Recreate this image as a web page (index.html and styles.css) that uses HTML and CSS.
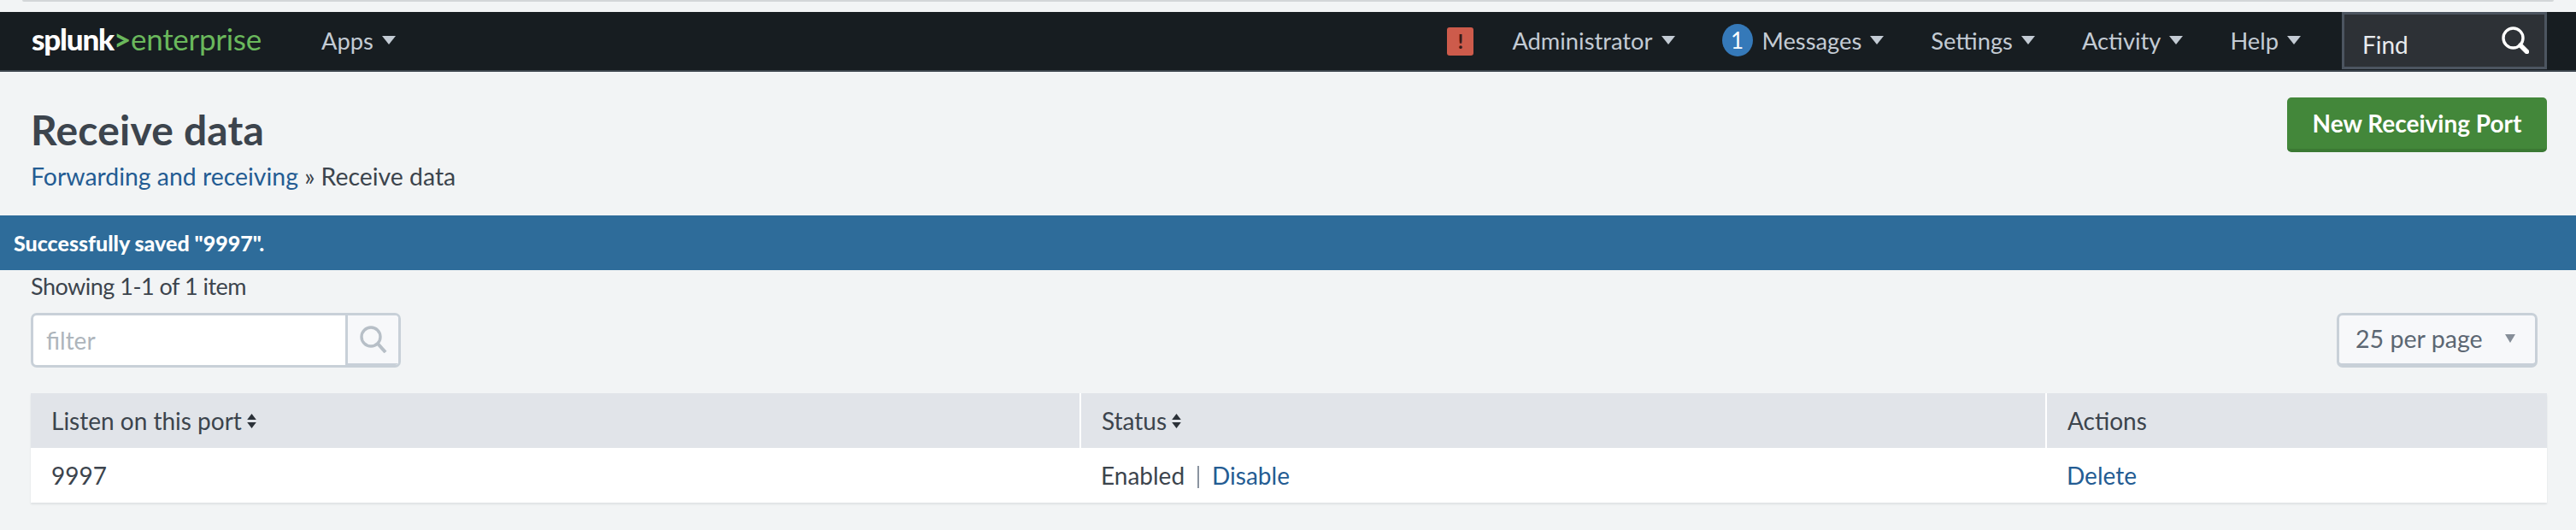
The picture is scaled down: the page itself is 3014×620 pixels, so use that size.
FILE: index.html
```html
<!DOCTYPE html>
<html lang="en">
<head>
<meta charset="utf-8">
<title>Receive data</title>
<link rel="stylesheet" href="styles.css">
</head>
<body>
<div class="top-line"></div>
<nav class="nav">
  <div class="logo"><span class="logo-splunk">splunk</span><span class="logo-gt">&gt;</span><span class="logo-ent">enterprise</span></div>
  <a class="nav-item nav-apps">Apps<i class="caret"></i></a>
  <div class="nav-right">
    <span class="alert">!</span>
    <a class="nav-item">Administrator<i class="caret"></i></a>
    <a class="nav-item nav-messages"><span class="badge">1</span>Messages<i class="caret"></i></a>
    <a class="nav-item">Settings<i class="caret"></i></a>
    <a class="nav-item">Activity<i class="caret"></i></a>
    <a class="nav-item">Help<i class="caret"></i></a>
    <div class="find">
      <span class="find-label">Find</span>
      <svg class="find-icon" viewBox="0 0 32 32" aria-hidden="true"><circle cx="13.5" cy="13.5" r="11.5" fill="none" stroke="#fff" stroke-width="3.4"/><path d="M22 22 L29.5 29.5" stroke="#fff" stroke-width="5.5" stroke-linecap="round"/></svg>
    </div>
  </div>
</nav>
<header class="page-head">
  <div>
    <h1 class="title">Receive data</h1>
    <div class="crumbs"><a class="link">Forwarding and receiving</a> » Receive data</div>
  </div>
  <a class="btn-primary">New Receiving Port</a>
</header>
<div class="banner">Successfully saved "9997".</div>
<section class="content">
  <div class="count">Showing 1-1 of 1 item</div>
  <div class="controls">
    <div class="filter">
      <input class="filter-input" type="text" placeholder="filter">
      <span class="filter-btn">
        <svg class="filter-icon" viewBox="0 0 32 32" aria-hidden="true"><circle cx="13" cy="13" r="11" fill="none" stroke="#b7bfc7" stroke-width="3.4"/><path d="M21 21 L30 31" stroke="#b7bfc7" stroke-width="4"/></svg>
      </span>
    </div>
    <div class="per-page">25 per page<i class="caret caret-small"></i></div>
  </div>
  <table class="table">
    <thead>
      <tr>
        <th class="col-port">Listen on this port<svg class="sort" viewBox="0 0 10 16" aria-hidden="true"><path d="M5 0 L10 6.5 H0 Z M5 16 L0 9.5 H10 Z"/></svg></th>
        <th class="col-status">Status<svg class="sort" viewBox="0 0 10 16" aria-hidden="true"><path d="M5 0 L10 6.5 H0 Z M5 16 L0 9.5 H10 Z"/></svg></th>
        <th>Actions</th>
      </tr>
    </thead>
    <tbody>
      <tr>
        <td>9997</td>
        <td>Enabled<span class="sep"></span><a class="link">Disable</a></td>
        <td><a class="link">Delete</a></td>
      </tr>
    </tbody>
  </table>
</section>
</body>
</html>
```
FILE: styles.css
```css
* { box-sizing: border-box; }
html, body { margin: 0; height: 100%; }
body {
  background: #f2f4f5;
  color: #3c444d;
  font-family: Lato, "Liberation Sans", sans-serif;
  font-size: 28px;
  overflow: hidden;
}
.top-line {
  height: 2px;
  margin: 0 26px 12px;
  background: #d3d6d8;
  border-radius: 0 0 6px 6px;
}
.nav {
  display: flex;
  align-items: center;
  height: 70px;
  padding-left: 37px;
  padding-right: 34px;
  background: #171d21;
  border-bottom: 2px solid #3c444d;
}
.logo {
  display: flex;
  align-items: baseline;
  width: 339px;
  font-size: 35px;
  letter-spacing: -1.2px;
  padding-bottom: 6px;
}
.logo-splunk { color: #fff; font-weight: 900; }
.logo-gt { color: #6ab85c; font-weight: 900; margin: 0 1px 0 0; }
.logo-ent { color: #6ab85c; letter-spacing: -0.3px; }
.nav-item {
  display: flex;
  align-items: center;
  color: #c3cbd4;
  font-size: 27.3px;
  white-space: nowrap;
  padding-bottom: 2px;
}
.nav-right {
  display: flex;
  align-items: center;
  gap: 55px;
  margin-left: auto;
  height: 100%;
}
.caret {
  width: 0;
  height: 0;
  margin-left: 10px;
  border-left: 8px solid transparent;
  border-right: 8px solid transparent;
  border-top: 10px solid #c3cbd4;
}
.caret-small {
  margin-left: 26px;
  border-left-width: 6px;
  border-right-width: 6px;
  border-top-width: 10px;
  border-top-color: #868e98;
}
.alert {
  display: flex;
  align-items: center;
  justify-content: center;
  width: 31px;
  height: 33px;
  margin-right: -10px;
  background: #cd5b4b;
  border-radius: 3px;
  color: #3a1a16;
  font-size: 22px;
  font-weight: 900;
}
.badge {
  display: flex;
  align-items: center;
  justify-content: center;
  width: 36px;
  height: 38px;
  margin-right: 11px;
  border-radius: 50%;
  background: #3579b9;
  color: #fff;
  font-size: 26px;
}
.find {
  display: flex;
  align-items: center;
  justify-content: space-between;
  width: 240px;
  height: 67px;
  margin-left: -7px;
  margin-top: -1px;
  padding: 0 18px 0 21px;
  background: #2d3136;
  border: 3px solid #4c5560;
  color: #e8ebee;
}
.find-label { font-size: 28px; padding-top: 8px; }
.find-icon { width: 32px; height: 32px; margin-top: -2px; }
.page-head {
  display: flex;
  justify-content: space-between;
  align-items: flex-start;
  height: 168px;
  padding: 30px 34px 0 36px;
}
.title {
  margin: 12px 0 0;
  font-size: 48px;
  line-height: 52px;
  letter-spacing: 0.2px;
  font-weight: 700;
  color: #3c444d;
}
.crumbs { margin-top: 10px; font-size: 28.4px; line-height: 36px; white-space: nowrap; }
.link { color: #245c93; }
.btn-primary {
  display: flex;
  align-items: center;
  justify-content: center;
  width: 304px;
  height: 64px;
  background: #43873a;
  border-bottom: 4px solid #3b7933;
  border-radius: 5px;
  color: #fff;
  font-size: 28px;
  font-weight: 700;
}
.banner {
  display: flex;
  align-items: center;
  height: 64px;
  padding-left: 16px;
  background: #2e6c9a;
  color: #fff;
  font-size: 25px;
  font-weight: 900;
}
.content { padding: 0 34px 0 36px; }
.count {
  height: 50px;
  padding-top: 1px;
  font-size: 27px;
  line-height: 36px;
  letter-spacing: -0.5px;
}
.controls {
  display: flex;
  justify-content: space-between;
  padding-right: 11px;
  height: 94px;
  align-items: flex-start;
}
.filter {
  display: flex;
  width: 433px;
  height: 64px;
  border: 3px solid #c8d0d8;
  border-radius: 7px;
  background: #fff;
  overflow: hidden;
}
.filter-input {
  flex: 1;
  min-width: 0;
  padding: 0 0 0 15px;
  border: 0;
  background: transparent;
  font: inherit;
  color: #3c444d;
}
.filter-input::placeholder { color: #aeb5bc; opacity: 1; }
.filter-btn {
  display: flex;
  align-items: center;
  justify-content: center;
  width: 62px;
  border-left: 3px solid #c8d0d8;
  border-bottom: 2px solid #c8d0d8;
  background: #f7f8fa;
}
.filter-icon { width: 32px; height: 32px; }
.per-page {
  display: flex;
  align-items: center;
  width: 235px;
  height: 64px;
  padding: 0 0 2px 19px;
  border: 3px solid #c8d0d8;
  border-bottom-width: 5px;
  border-radius: 7px;
  background: #f7f8fa;
  color: #5c6773;
  font-size: 28.6px;
}
.table {
  width: 2944px;
  table-layout: fixed;
  border-collapse: collapse;
  box-shadow: 0 2px 2px rgba(60, 68, 77, .1);
}
.table th, .table td {
  height: 64px;
  padding: 0 0 0 24px;
  text-align: left;
  vertical-align: middle;
  font-weight: 400;
}
.table th { background: #e1e4e9; }
.table td { background: #fff; }
.table .col-port { width: 1228px; border-right: 2px solid #fff; }
.table .col-status { width: 1130px; border-right: 2px solid #fff; }
.sort { display: inline-block; width: 11px; height: 17px; margin-left: 6px; fill: #2b3138; vertical-align: 2px; }
.sep {
  display: inline-block;
  width: 2px;
  height: 26px;
  margin: 0 15px;
  background: #8a94a0;
  vertical-align: -4px;
}
```
